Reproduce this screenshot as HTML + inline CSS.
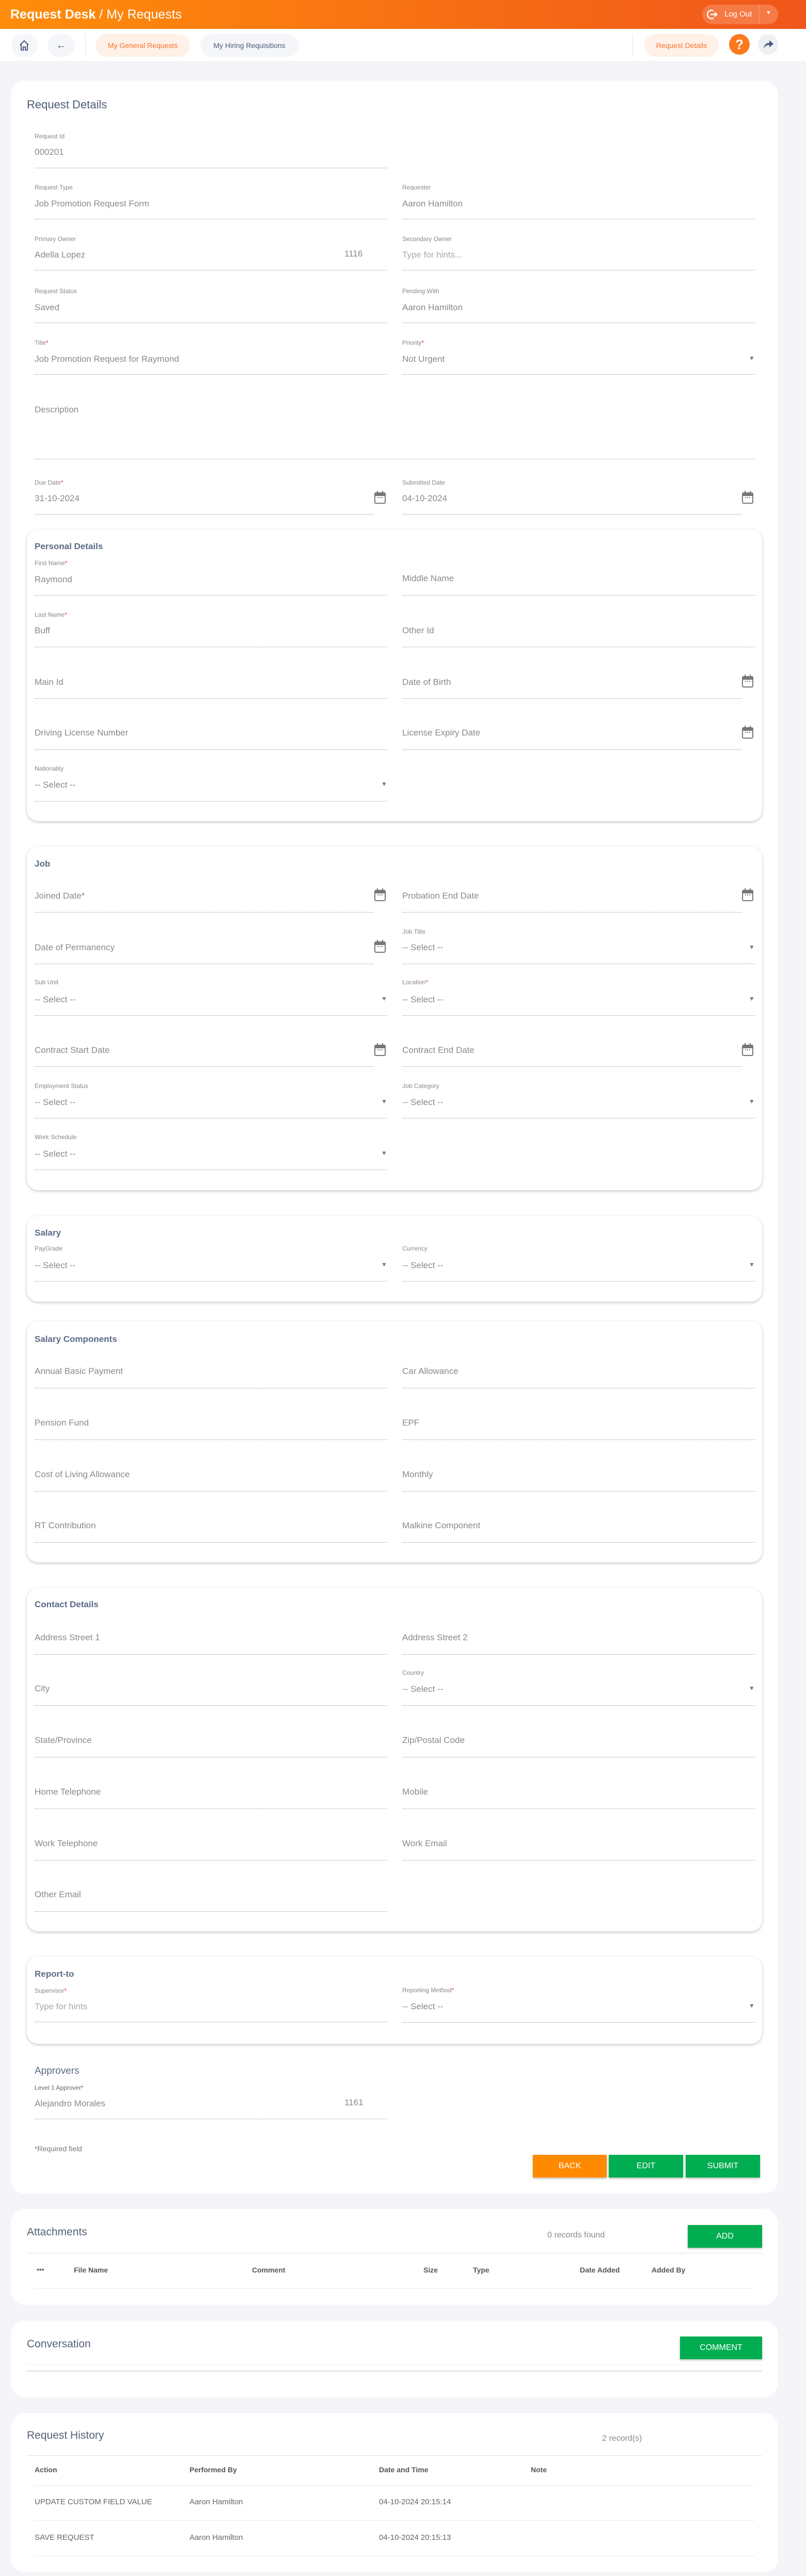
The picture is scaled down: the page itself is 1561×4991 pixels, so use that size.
<!DOCTYPE html>
<html><head><meta charset="utf-8">
<style>
*{margin:0;padding:0;box-sizing:border-box}
body{width:1561px;height:4991px;position:relative;background:#f4f4f9;font-family:"Liberation Sans",sans-serif;overflow:hidden}
.a{position:absolute}
.hdr{left:0;top:0;width:1561px;height:56px;background:linear-gradient(90deg,#ff8d0b,#f0561b)}
.nav{left:0;top:56px;width:1561px;height:64px;background:#fff;border-bottom:1px solid #ececf2}
.pill{position:absolute;top:66px;height:44px;border-radius:22px;background:#f5f6f9;font-size:14px;line-height:44px;text-align:center;color:#4c5b7a}
.card{position:absolute;background:#fff;border-radius:28px}
.ic{position:absolute;left:52px;width:1424px;background:#fff;border-radius:22px;box-shadow:0 2px 6px rgba(0,0,0,.22)}
.lb{position:absolute;font-size:12px;line-height:14px;color:#8b8787;white-space:nowrap}
.lb i{color:#e8334a;font-style:normal}
.v{position:absolute;font-size:17px;line-height:20px;color:#8a8a8a;white-space:nowrap}
.ph{color:#aaa}
.u{position:absolute;height:0;border-top:1px dotted #999}
.t{position:absolute;font-size:17px;font-weight:bold;color:#5b6a86;line-height:20px}
.arr{position:absolute;font-size:12px;color:#777;line-height:14px}
.cal{position:absolute;width:22px;height:26px}
.btn{position:absolute;color:#fff;font-size:16px;text-align:center;line-height:44px;box-shadow:0 2px 4px rgba(0,0,0,.25)}
.th{position:absolute;font-size:14px;font-weight:bold;color:#555;line-height:16px}
.td{position:absolute;font-size:15px;color:#666;line-height:16px}
.hl{position:absolute;height:0;border-top:1px solid #eaeaea}
</style></head><body>

<div class="a hdr"></div>
<div class="a" style="left:20px;top:14px;font-size:25px;line-height:28px;color:#fff;white-space:nowrap"><b>Request Desk</b> / My Requests</div>
<div class="a" style="left:1360px;top:9px;width:147px;height:38px;border-radius:19px;background:#f57a45"></div>
<div class="a" style="left:1470px;top:9px;width:1px;height:38px;background:#f99a70"></div>
<svg class="a" style="left:1368px;top:16px" width="24" height="24" viewBox="0 0 24 24"><path d="M14 5A8 8 0 1 0 14 19" fill="none" stroke="#fff" stroke-width="2.5"/><path d="M8 12H20M16 8l4 4-4 4" fill="none" stroke="#fff" stroke-width="2.5"/></svg>
<div class="a" style="left:1403px;top:18px;font-size:15px;color:#fff;line-height:20px">Log Out</div>
<div class="a" style="left:1483px;top:19px;font-size:11px;color:#fff">▼</div>

<div class="a nav"></div>
<div class="pill" style="left:22px;width:51px"></div>
<svg class="a" style="left:36px;top:76px" width="22" height="24" viewBox="0 0 22 24"><path d="M3 11L11 3L19 11M5 9V21H9V15H13V21H17V9" fill="none" stroke="#4c5b7a" stroke-width="2"/></svg>
<div class="pill" style="left:92px;width:53px;font-size:20px">←</div>
<div class="a" style="left:165px;top:66px;width:1px;height:44px;background:#e6e6ea"></div>
<div class="pill" style="left:185px;width:183px;background:#fff0e8;color:#f7742a">My General Requests</div>
<div class="pill" style="left:388px;width:190px">My Hiring Requisitions</div>
<div class="a" style="left:1225px;top:66px;width:1px;height:44px;background:#e6e6ea"></div>
<div class="pill" style="left:1248px;width:144px;background:#fff0e8;color:#f7742a">Request Details</div>
<div class="a" style="left:1412px;top:66px;width:40px;height:40px;border-radius:50%;background:#fb7a1e;color:#fff;font-size:26px;font-weight:bold;text-align:center;line-height:40px">?</div>
<div class="a" style="left:1468px;top:66px;width:39px;height:40px;border-radius:50%;background:#eef0f3"></div>
<svg class="a" style="left:1477px;top:76px" width="22" height="20" viewBox="0 0 22 20"><path d="M2 18C3 10 8 7 13 7V2L21 9L13 16V11C8 11 5 13 2 18Z" fill="#4c5b7a"/></svg>

<!-- main card -->
<div class="card" style="left:21px;top:156px;width:1486px;height:4094px"></div>
<div class="a" style="left:52px;top:190px;font-size:22px;color:#4d5a75;line-height:26px">Request Details</div>

<!-- Request Id -->
<div class="lb" style="left:67px;top:257px">Request Id</div>
<div class="v" style="left:67px;top:285px">000201</div>
<div class="u" style="left:67px;top:325px;width:682px"></div>

<div class="lb" style="left:67px;top:356px">Request Type</div>
<div class="v" style="left:67px;top:385px">Job Promotion Request Form</div>
<div class="u" style="left:67px;top:424px;width:682px"></div>
<div class="lb" style="left:779px;top:356px">Requester</div>
<div class="v" style="left:779px;top:385px">Aaron Hamilton</div>
<div class="u" style="left:779px;top:424px;width:683px"></div>

<div class="lb" style="left:67px;top:456px">Primary Owner</div>
<div class="v" style="left:67px;top:484px">Adella Lopez</div>
<div class="v" style="left:667px;top:482px">1116</div>
<div class="u" style="left:67px;top:523px;width:682px"></div>
<div class="lb" style="left:779px;top:456px">Secondary Owner</div>
<div class="v ph" style="left:779px;top:484px">Type for hints...</div>
<div class="u" style="left:779px;top:523px;width:683px"></div>

<div class="lb" style="left:67px;top:557px">Request Status</div>
<div class="v" style="left:67px;top:586px">Saved</div>
<div class="u" style="left:67px;top:625px;width:682px"></div>
<div class="lb" style="left:779px;top:557px">Pending With</div>
<div class="v" style="left:779px;top:586px">Aaron Hamilton</div>
<div class="u" style="left:779px;top:625px;width:683px"></div>

<div class="lb" style="left:67px;top:657px">Title<i>*</i></div>
<div class="v" style="left:67px;top:686px">Job Promotion Request for Raymond</div>
<div class="u" style="left:67px;top:725px;width:682px"></div>
<div class="lb" style="left:779px;top:657px">Priority<i>*</i></div>
<div class="v" style="left:779px;top:686px">Not Urgent</div>
<div class="arr" style="left:1450px;top:687px">▼</div>
<div class="u" style="left:779px;top:725px;width:683px"></div>

<div class="v" style="left:67px;top:784px">Description</div>
<div class="u" style="left:67px;top:889px;width:1395px"></div>

<div class="lb" style="left:67px;top:928px">Due Date<i>*</i></div>
<div class="v" style="left:67px;top:956px">31-10-2024</div>
<div class="u" style="left:67px;top:996px;width:657px"></div>
<div class="lb" style="left:779px;top:928px">Submitted Date</div>
<div class="v" style="left:779px;top:956px">04-10-2024</div>
<div class="u" style="left:779px;top:996px;width:658px"></div>

<!-- Personal -->
<div class="ic" style="top:1026px;height:565px"></div>
<div class="t" style="left:67px;top:1049px">Personal Details</div>
<div class="lb" style="left:67px;top:1084px">First Name<i>*</i></div>
<div class="v" style="left:67px;top:1113px">Raymond</div>
<div class="u" style="left:67px;top:1153px;width:682px"></div>
<div class="v" style="left:779px;top:1111px">Middle Name</div>
<div class="u" style="left:779px;top:1153px;width:683px"></div>
<div class="lb" style="left:67px;top:1184px">Last Name<i>*</i></div>
<div class="v" style="left:67px;top:1212px">Buff</div>
<div class="u" style="left:67px;top:1253px;width:682px"></div>
<div class="v" style="left:779px;top:1212px">Other Id</div>
<div class="u" style="left:779px;top:1253px;width:683px"></div>
<div class="v" style="left:67px;top:1312px">Main Id</div>
<div class="u" style="left:67px;top:1353px;width:682px"></div>
<div class="v" style="left:779px;top:1312px">Date of Birth</div>
<div class="u" style="left:779px;top:1353px;width:658px"></div>
<div class="v" style="left:67px;top:1410px">Driving License Number</div>
<div class="u" style="left:67px;top:1452px;width:682px"></div>
<div class="v" style="left:779px;top:1410px">License Expiry Date</div>
<div class="u" style="left:779px;top:1452px;width:658px"></div>
<div class="lb" style="left:67px;top:1482px">Nationality</div>
<div class="v" style="left:67px;top:1511px">-- Select --</div>
<div class="arr" style="left:738px;top:1512px">▼</div>
<div class="u" style="left:67px;top:1552px;width:682px"></div>

<!-- Job -->
<div class="ic" style="top:1640px;height:666px"></div>
<div class="t" style="left:67px;top:1664px">Job</div>
<div class="v" style="left:67px;top:1726px">Joined Date*</div>
<div class="u" style="left:67px;top:1767px;width:657px"></div>
<div class="v" style="left:779px;top:1726px">Probation End Date</div>
<div class="u" style="left:779px;top:1767px;width:658px"></div>
<div class="v" style="left:67px;top:1826px">Date of Permanency</div>
<div class="u" style="left:67px;top:1867px;width:657px"></div>
<div class="lb" style="left:779px;top:1798px">Job Title</div>
<div class="v" style="left:779px;top:1826px">-- Select --</div>
<div class="arr" style="left:1450px;top:1828px">▼</div>
<div class="u" style="left:779px;top:1867px;width:683px"></div>
<div class="lb" style="left:67px;top:1896px">Sub Unit</div>
<div class="v" style="left:67px;top:1927px">-- Select --</div>
<div class="arr" style="left:738px;top:1928px">▼</div>
<div class="u" style="left:67px;top:1967px;width:682px"></div>
<div class="lb" style="left:779px;top:1896px">Location<i>*</i></div>
<div class="v" style="left:779px;top:1927px">-- Select --</div>
<div class="arr" style="left:1450px;top:1928px">▼</div>
<div class="u" style="left:779px;top:1967px;width:683px"></div>
<div class="v" style="left:67px;top:2025px">Contract Start Date</div>
<div class="u" style="left:67px;top:2066px;width:657px"></div>
<div class="v" style="left:779px;top:2025px">Contract End Date</div>
<div class="u" style="left:779px;top:2066px;width:658px"></div>
<div class="lb" style="left:67px;top:2097px">Employment Status</div>
<div class="v" style="left:67px;top:2126px">-- Select --</div>
<div class="arr" style="left:738px;top:2127px">▼</div>
<div class="u" style="left:67px;top:2166px;width:682px"></div>
<div class="lb" style="left:779px;top:2097px">Job Category</div>
<div class="v" style="left:779px;top:2126px">-- Select --</div>
<div class="arr" style="left:1450px;top:2127px">▼</div>
<div class="u" style="left:779px;top:2166px;width:683px"></div>
<div class="lb" style="left:67px;top:2196px">Work Schedule</div>
<div class="v" style="left:67px;top:2226px">-- Select --</div>
<div class="arr" style="left:738px;top:2227px">▼</div>
<div class="u" style="left:67px;top:2266px;width:682px"></div>

<!-- Salary -->
<div class="ic" style="top:2356px;height:166px"></div>
<div class="t" style="left:67px;top:2379px">Salary</div>
<div class="lb" style="left:67px;top:2412px">PayGrade</div>
<div class="v" style="left:67px;top:2442px">-- Select --</div>
<div class="arr" style="left:738px;top:2443px">▼</div>
<div class="u" style="left:67px;top:2482px;width:682px"></div>
<div class="lb" style="left:779px;top:2412px">Currency</div>
<div class="v" style="left:779px;top:2442px">-- Select --</div>
<div class="arr" style="left:1450px;top:2443px">▼</div>
<div class="u" style="left:779px;top:2482px;width:683px"></div>

<!-- Salary Components -->
<div class="ic" style="top:2560px;height:467px"></div>
<div class="t" style="left:67px;top:2585px">Salary Components</div>
<div class="v" style="left:67px;top:2647px">Annual Basic Payment</div>
<div class="u" style="left:67px;top:2689px;width:682px"></div>
<div class="v" style="left:779px;top:2647px">Car Allowance</div>
<div class="u" style="left:779px;top:2689px;width:683px"></div>
<div class="v" style="left:67px;top:2747px">Pension Fund</div>
<div class="u" style="left:67px;top:2789px;width:682px"></div>
<div class="v" style="left:779px;top:2747px">EPF</div>
<div class="u" style="left:779px;top:2789px;width:683px"></div>
<div class="v" style="left:67px;top:2847px">Cost of Living Allowance</div>
<div class="u" style="left:67px;top:2889px;width:682px"></div>
<div class="v" style="left:779px;top:2847px">Monthly</div>
<div class="u" style="left:779px;top:2889px;width:683px"></div>
<div class="v" style="left:67px;top:2946px">RT Contribution</div>
<div class="u" style="left:67px;top:2988px;width:682px"></div>
<div class="v" style="left:779px;top:2946px">Malkine Component</div>
<div class="u" style="left:779px;top:2988px;width:683px"></div>

<!-- Contact -->
<div class="ic" style="top:3077px;height:665px"></div>
<div class="t" style="left:67px;top:3099px">Contact Details</div>
<div class="v" style="left:67px;top:3163px">Address Street 1</div>
<div class="u" style="left:67px;top:3205px;width:682px"></div>
<div class="v" style="left:779px;top:3163px">Address Street 2</div>
<div class="u" style="left:779px;top:3205px;width:683px"></div>
<div class="v" style="left:67px;top:3262px">City</div>
<div class="u" style="left:67px;top:3304px;width:682px"></div>
<div class="lb" style="left:779px;top:3234px">Country</div>
<div class="v" style="left:779px;top:3263px">-- Select --</div>
<div class="arr" style="left:1450px;top:3264px">▼</div>
<div class="u" style="left:779px;top:3304px;width:683px"></div>
<div class="v" style="left:67px;top:3362px">State/Province</div>
<div class="u" style="left:67px;top:3404px;width:682px"></div>
<div class="v" style="left:779px;top:3362px">Zip/Postal Code</div>
<div class="u" style="left:779px;top:3404px;width:683px"></div>
<div class="v" style="left:67px;top:3462px">Home Telephone</div>
<div class="u" style="left:67px;top:3504px;width:682px"></div>
<div class="v" style="left:779px;top:3462px">Mobile</div>
<div class="u" style="left:779px;top:3504px;width:683px"></div>
<div class="v" style="left:67px;top:3562px">Work Telephone</div>
<div class="u" style="left:67px;top:3604px;width:682px"></div>
<div class="v" style="left:779px;top:3562px">Work Email</div>
<div class="u" style="left:779px;top:3604px;width:683px"></div>
<div class="v" style="left:67px;top:3661px">Other Email</div>
<div class="u" style="left:67px;top:3703px;width:682px"></div>

<!-- Report-to -->
<div class="ic" style="top:3791px;height:169px"></div>
<div class="t" style="left:67px;top:3815px">Report-to</div>
<div class="lb" style="left:67px;top:3850px">Supervisor<i>*</i></div>
<div class="v ph" style="left:67px;top:3878px">Type for hints</div>
<div class="u" style="left:67px;top:3917px;width:682px"></div>
<div class="lb" style="left:779px;top:3849px">Reporting Method<i>*</i></div>
<div class="v" style="left:779px;top:3878px">-- Select --</div>
<div class="arr" style="left:1450px;top:3879px">▼</div>
<div class="u" style="left:779px;top:3918px;width:683px"></div>

<!-- Approvers -->
<div class="t" style="left:67px;top:4003px;font-weight:normal;font-size:19px">Approvers</div>
<div class="lb" style="left:67px;top:4038px;color:#666">Level 1 Approver*</div>
<div class="v" style="left:67px;top:4066px">Alejandro Morales</div>
<div class="v" style="left:667px;top:4064px">1161</div>
<div class="u" style="left:67px;top:4105px;width:682px"></div>
<div class="a" style="left:67px;top:4155px;font-size:14px;color:#777">*Required field</div>

<div class="btn" style="left:1032px;top:4175px;width:143px;height:44px;background:#ff8a00">BACK</div>
<div class="btn" style="left:1179px;top:4175px;width:144px;height:44px;background:#00ad50">EDIT</div>
<div class="btn" style="left:1328px;top:4175px;width:144px;height:44px;background:#00ad50">SUBMIT</div>

<!-- Attachments -->
<div class="card" style="left:21px;top:4280px;width:1486px;height:186px"></div>
<div class="a" style="left:52px;top:4313px;font-size:21px;color:#55627a">Attachments</div>
<div class="a" style="left:1060px;top:4322px;font-size:16px;color:#888">0 records found</div>
<div class="btn" style="left:1332px;top:4311px;width:144px;height:44px;background:#00ad50">ADD</div>
<div class="hl" style="left:52px;top:4365px;width:1424px;border-color:#e2e2e2"></div>
<div class="th" style="left:71px;top:4389px;color:#666">•••</div>
<div class="th" style="left:143px;top:4390px">File Name</div>
<div class="th" style="left:488px;top:4390px">Comment</div>
<div class="th" style="left:820px;top:4390px">Size</div>
<div class="th" style="left:916px;top:4390px">Type</div>
<div class="th" style="left:1123px;top:4390px">Date Added</div>
<div class="th" style="left:1262px;top:4390px">Added By</div>
<div class="hl" style="left:67px;top:4433px;width:1395px"></div>

<!-- Conversation -->
<div class="card" style="left:21px;top:4496px;width:1486px;height:149px"></div>
<div class="a" style="left:52px;top:4530px;font-size:21px;color:#55627a">Conversation</div>
<div class="btn" style="left:1317px;top:4527px;width:159px;height:44px;background:#00ad50">COMMENT</div>
<div class="hl" style="left:52px;top:4581px;width:1424px;border-color:#eeeeee"></div>
<div class="hl" style="left:52px;top:4593px;width:1424px;border-top:2px solid #dedede"></div>

<!-- Request History -->
<div class="card" style="left:21px;top:4675px;width:1486px;height:309px"></div>
<div class="a" style="left:52px;top:4707px;font-size:21px;color:#55627a">Request History</div>
<div class="a" style="left:1166px;top:4716px;font-size:16px;color:#888">2 record(s)</div>
<div class="hl" style="left:52px;top:4757px;width:1424px;border-color:#e2e2e2"></div>
<div class="th" style="left:67px;top:4777px">Action</div>
<div class="th" style="left:367px;top:4777px">Performed By</div>
<div class="th" style="left:734px;top:4777px">Date and Time</div>
<div class="th" style="left:1028px;top:4777px">Note</div>
<div class="hl" style="left:67px;top:4815px;width:1395px"></div>
<div class="td" style="left:67px;top:4840px">UPDATE CUSTOM FIELD VALUE</div>
<div class="td" style="left:367px;top:4840px">Aaron Hamilton</div>
<div class="td" style="left:734px;top:4840px">04-10-2024 20:15:14</div>
<div class="hl" style="left:67px;top:4883px;width:1395px"></div>
<div class="td" style="left:67px;top:4909px">SAVE REQUEST</div>
<div class="td" style="left:367px;top:4909px">Aaron Hamilton</div>
<div class="td" style="left:734px;top:4909px">04-10-2024 20:15:13</div>
<div class="hl" style="left:67px;top:4952px;width:1395px"></div>

<!-- calendar icons -->
<svg width="0" height="0" style="position:absolute"><defs><symbol id="c" viewBox="0 0 22 26"><rect x="1" y="5" width="20" height="20" rx="2" fill="none" stroke="#777" stroke-width="2"/><rect x="1" y="5" width="20" height="6" fill="#777"/><rect x="5" y="1" width="2" height="6" fill="#777"/><rect x="15" y="1" width="2" height="6" fill="#777"/><rect x="6" y="13" width="2" height="2" fill="#777"/><rect x="10" y="13" width="2" height="2" fill="#777"/><rect x="14" y="13" width="2" height="2" fill="#777"/></symbol></defs></svg>
<svg class="cal" style="left:725px;top:950px"><use href="#c"/></svg>
<svg class="cal" style="left:1437px;top:950px"><use href="#c"/></svg>
<svg class="cal" style="left:1437px;top:1306px"><use href="#c"/></svg>
<svg class="cal" style="left:1437px;top:1405px"><use href="#c"/></svg>
<svg class="cal" style="left:725px;top:1720px"><use href="#c"/></svg>
<svg class="cal" style="left:1437px;top:1720px"><use href="#c"/></svg>
<svg class="cal" style="left:725px;top:1820px"><use href="#c"/></svg>
<svg class="cal" style="left:725px;top:2020px"><use href="#c"/></svg>
<svg class="cal" style="left:1437px;top:2020px"><use href="#c"/></svg>

</body></html>
